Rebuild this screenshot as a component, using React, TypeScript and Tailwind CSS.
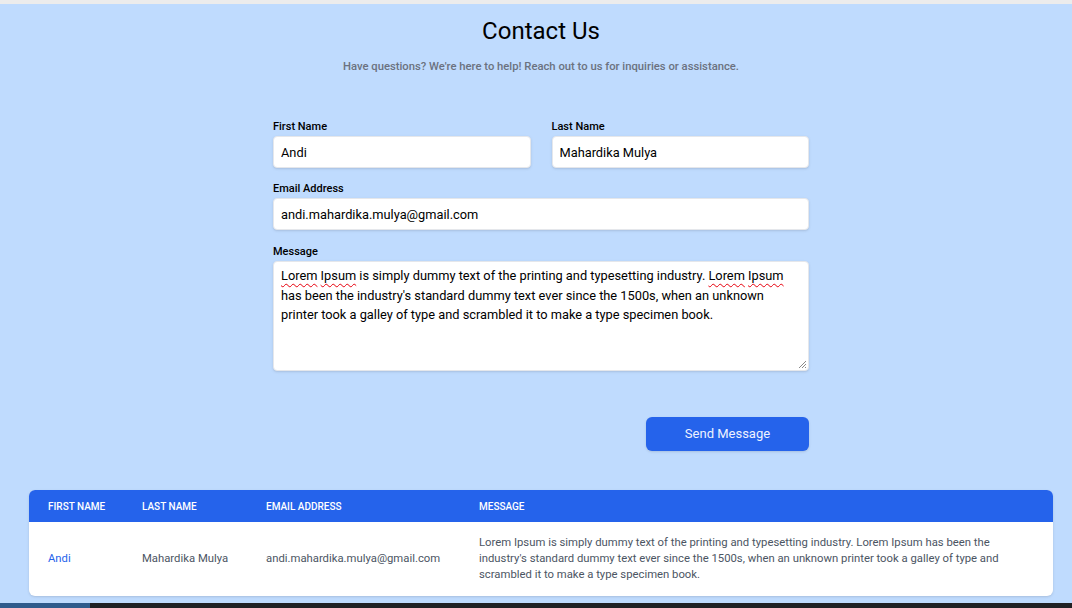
import React from "react";

const lorem =
  "Lorem Ipsum is simply dummy text of the printing and typesetting industry. Lorem Ipsum has been the industry's standard dummy text ever since the 1500s, when an unknown printer took a galley of type and scrambled it to make a type specimen book.";

function Field({ label, value }: { label: string; value: string }) {
  return (
    <label className="flex flex-col">
      <span className="text-[11px] font-medium leading-4 text-black mb-px">{label}</span>
      <input
        readOnly
        value={value}
        className="h-8 w-full rounded border border-gray-200 bg-white px-[7px] text-[12.8px] text-black shadow-sm outline-none"
      />
    </label>
  );
}

export default function App() {
  const squiggle = "underline decoration-wavy decoration-red-600 decoration-1 underline-offset-[3px]";

  return (
    <div className="h-[608px] w-full overflow-hidden bg-[#bfdbfe] font-['Roboto',sans-serif] flex flex-col">
      <div className="h-[4px] bg-[#ececec]" />

      <div className="flex-1 pl-[10px]">
        {/* Header */}
        <div className="pt-[11px] text-center">
          <h1 className="text-2xl leading-8 text-black">Contact Us</h1>
          <p className="mt-[12px] text-[11.25px] font-medium leading-4 text-[#6b7280]">
            Have questions? We're here to help! Reach out to us for inquiries or assistance.
          </p>
        </div>

        {/* Form */}
        <form className="mx-auto mt-[44px] w-[536px]" onSubmit={(e) => e.preventDefault()}>
          <div className="grid grid-cols-2 gap-x-[21px]">
            <Field label="First Name" value="Andi" />
            <Field label="Last Name" value="Mahardika Mulya" />
          </div>
          <div className="mt-[13px]">
            <Field label="Email Address" value="andi.mahardika.mulya@gmail.com" />
          </div>
          <div className="mt-[14px] flex flex-col">
            <span className="text-[11px] font-medium leading-4 text-black mb-px">Message</span>
            <div className="relative h-[110px] rounded border border-gray-200 bg-white px-[7px] pt-[4px] text-[12.8px] leading-[19.5px] text-black shadow-sm">
              <span className={squiggle}>Lorem</span> <span className={squiggle}>Ipsum</span> is simply dummy
              text of the printing and typesetting industry. <span className={squiggle}>Lorem</span>{" "}
              <span className={squiggle}>Ipsum</span> has been the industry's standard dummy text ever since the
              1500s, when an unknown printer took a galley of type and scrambled it to make a type specimen book.
              <svg className="absolute bottom-[1px] right-[1px]" width="10" height="10" viewBox="0 0 10 10">
                <path d="M9 2 L2 9 M9 5 L5 9 M9 8 L8 9" stroke="#8a8a8a" strokeWidth="1" />
              </svg>
            </div>
          </div>
          <div className="mt-[46px] flex justify-end">
            <button
              type="submit"
              className="h-[34px] w-[163px] rounded-md bg-[#2563eb] text-[13px] text-[#eef2ff] shadow-sm"
            >
              Send Message
            </button>
          </div>
        </form>

        {/* Table */}
        <div className="mx-auto mt-[39px] w-[1024px] overflow-hidden rounded-md bg-white shadow-sm">
          <table className="w-full table-fixed text-left">
            <colgroup>
              <col className="w-[94px]" />
              <col className="w-[124px]" />
              <col className="w-[213px]" />
              <col />
            </colgroup>
            <thead className="bg-[#2563eb]">
              <tr className="h-8">
                {["First Name", "Last Name", "Email Address", "Message"].map((h) => (
                  <th key={h} className="pl-[19px] text-[10px] font-medium uppercase text-white">
                    {h}
                  </th>
                ))}
              </tr>
            </thead>
            <tbody>
              <tr className="text-[11.3px] text-[#4b5563]">
                <td className="pl-[19px] text-[#2563eb]">Andi</td>
                <td className="pl-[19px]">Mahardika Mulya</td>
                <td className="pl-[19px]">andi.mahardika.mulya@gmail.com</td>
                <td className="py-[13px] pl-[19px] pr-[40px] leading-4">{lorem}</td>
              </tr>
            </tbody>
          </table>
        </div>
      </div>

      <div className="flex h-[5px] bg-[#202124]">
        <div className="w-[90px] bg-[#2f5b8c]" />
      </div>
    </div>
  );
}
